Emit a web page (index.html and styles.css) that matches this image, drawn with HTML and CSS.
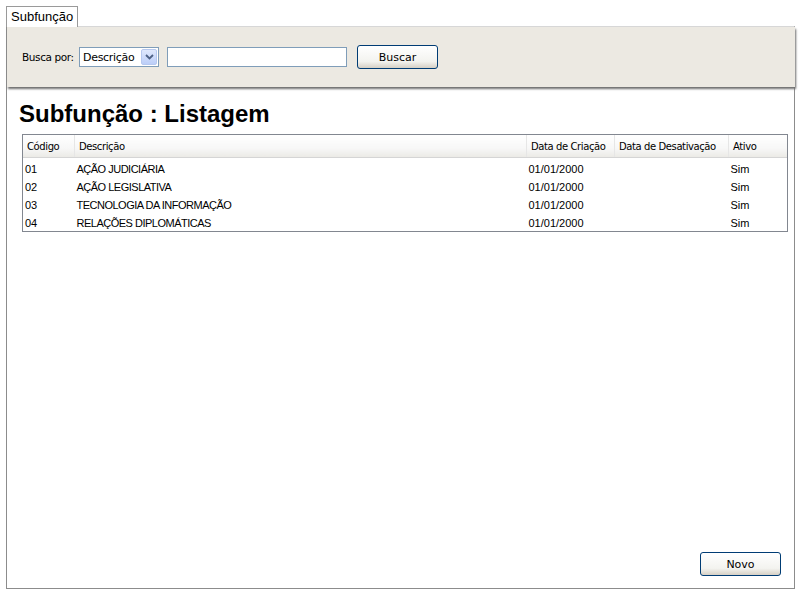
FILE: index.html
```html
<!DOCTYPE html>
<html lang="pt">
<head>
<meta charset="utf-8">
<title>Subfunção</title>
<link rel="stylesheet" href="styles.css">
</head>
<body>
<div class="tabs"><span class="tab">Subfunção</span></div>
<div class="frame">
  <div class="search">
    <label class="lbl">Busca por:</label>
    <div class="select"><span class="sel-text">Descrição</span><span class="sel-btn"><svg width="9" height="6" viewBox="0 0 9 6"><path d="M1 1 L4.5 4.5 L8 1" fill="none" stroke="#4d6185" stroke-width="1.8"/></svg></span></div>
    <div class="input"></div>
    <button class="btn btn-buscar">Buscar</button>
  </div>
  <h1 class="title">Subfunção : Listagem</h1>
  <div class="grid">
    <table>
      <thead>
        <tr><th class="c1">Código</th><th class="c2">Descrição</th><th class="c3">Data de Criação</th><th class="c4">Data de Desativação</th><th class="c5">Ativo</th></tr>
      </thead>
      <tbody>
        <tr><td>01</td><td class="desc">AÇÃO JUDICIÁRIA</td><td>01/01/2000</td><td></td><td>Sim</td></tr>
        <tr><td>02</td><td class="desc">AÇÃO LEGISLATIVA</td><td>01/01/2000</td><td></td><td>Sim</td></tr>
        <tr><td>03</td><td class="desc">TECNOLOGIA DA INFORMAÇÃO</td><td>01/01/2000</td><td></td><td>Sim</td></tr>
        <tr><td>04</td><td class="desc">RELAÇÕES DIPLOMÁTICAS</td><td>01/01/2000</td><td></td><td>Sim</td></tr>
      </tbody>
    </table>
  </div>
  <div class="footer"><button class="btn btn-novo">Novo</button></div>
</div>
</body>
</html>
```
FILE: styles.css
```css
html, body { margin: 0; padding: 0; background: #fff; }
body { padding: 6px 0 0 6px; font-family: "DejaVu Sans", Tahoma, sans-serif; color: #000; }
.tabs { height: 20px; }
.tab {
  display: inline-block; box-sizing: border-box; height: 21px; width: 72px;
  border: 1px solid #9a9a9a; border-bottom: none; background: #fff;
  font-family: "Liberation Sans", Arial, sans-serif; font-size: 13px; line-height: 19px;
  padding-left: 4px; position: relative; z-index: 2;
}
.frame {
  box-sizing: border-box; width: 789px; height: 563px;
  border: 1px solid #8c8c8c; border-top-color: #d8d8d8;
  display: flex; flex-direction: column;
}
.search {
  height: 60px; box-sizing: border-box; margin-right: -1px;
  background: #ece9e2; box-shadow: 1px 2px 2px #6e6e6e;
  display: flex; align-items: center; padding: 0 0 0 15px;
  font-size: 11px;
}
.lbl { font-family: "DejaVu Sans", sans-serif; font-size: 10.5px; width: 57px; white-space: nowrap; letter-spacing: -0.4px; }
.select {
  width: 80px; height: 20px; box-sizing: border-box; border: 1px solid #7f9db9; background: #fff;
  display: flex; align-items: center; justify-content: space-between; padding: 0 1px 0 3px;
}
.sel-text { font-size: 11px; letter-spacing: -0.3px; }
.sel-btn {
  width: 16px; height: 16px; box-sizing: border-box; border: 1px solid #b6c8ef; border-radius: 2px;
  background: linear-gradient(#dfe8fc, #bccef8); display: flex; align-items: center; justify-content: center;
}
.input { width: 180px; height: 20px; box-sizing: border-box; border: 1px solid #7f9db9; background: #fff; margin-left: 8px; }
.btn {
  box-sizing: border-box; width: 81px; height: 24px; border: 1px solid #003c74; border-radius: 3px;
  background: linear-gradient(#ffffff, #f3f3ef 70%, #d6d0c5);
  font-family: "DejaVu Sans", Tahoma, sans-serif; font-size: 11px; color: #000; padding: 0;
}
.btn-buscar { margin-left: 10px; }
.title {
  margin: 13px 0 0 12px; font-family: "Liberation Sans", Arial, sans-serif; font-weight: bold;
  font-size: 24px; line-height: 27px; height: 27px;
}
.grid { margin: 7px 0 0 15px; width: 766px; box-sizing: border-box; border: 1px solid #828790; }
table { width: 100%; border-collapse: collapse; table-layout: fixed; font-family: "Liberation Sans", Arial, sans-serif; font-size: 11px; }
th {
  height: 21px; padding: 1px 0 0 4px; text-align: left; font-weight: normal;
  font-family: "DejaVu Sans", Tahoma, sans-serif; font-size: 10px; letter-spacing: -0.4px;
  background: linear-gradient(#ffffff, #f7f7f7 60%, #ebeae6); border-right: 1px solid #e6e6e6;
  border-bottom: 1px solid #d5d5d5; white-space: nowrap; overflow: hidden;
}
th:last-child { border-right: none; }
.c1 { width: 47px; } .c2 { width: 447px; } .c3 { width: 83px; } .c4 { width: 109px; }
td { height: 17px; padding: 1px 0 0 2px; white-space: nowrap; }
td.desc { letter-spacing: -0.5px; }
tbody tr:first-child td { padding-top: 2px; }
.footer { margin-top: auto; display: flex; justify-content: flex-end; padding: 0 13px 12px 0; }
```
